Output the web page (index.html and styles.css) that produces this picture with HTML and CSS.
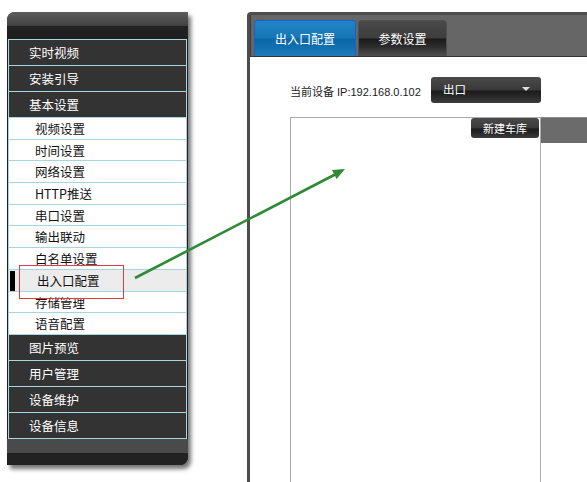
FILE: index.html
```html
<!DOCTYPE html>
<html>
<head>
<meta charset="utf-8">
<link rel="stylesheet" href="styles.css">
</head>
<body>
<div class="page">
  <nav class="sidebar">
    <div class="sb-head"></div>
    <ul class="menu">
      <li class="top">实时视频</li>
      <li class="top">安装引导</li>
      <li class="top">基本设置</li>
      <li class="sub">视频设置</li>
      <li class="sub">时间设置</li>
      <li class="sub">网络设置</li>
      <li class="sub">HTTP推送</li>
      <li class="sub">串口设置</li>
      <li class="sub">输出联动</li>
      <li class="sub">白名单设置</li>
      <li class="sub active">出入口配置</li>
      <li class="sub">存储管理</li>
      <li class="sub">语音配置</li>
      <li class="top">图片预览</li>
      <li class="top">用户管理</li>
      <li class="top">设备维护</li>
      <li class="top">设备信息</li>
    </ul>
    <div class="sb-foot"></div>
  </nav>
  <section class="panel">
    <div class="tabbar">
      <div class="tab tab-active">出入口配置</div>
      <div class="tab">参数设置</div>
    </div>
    <div class="content">
      <div class="row">
        <span class="label">当前设备 IP:192.168.0.102</span>
        <div class="select"><span>出口</span><i class="caret"></i></div>
      </div>
      <div class="table">
        <div class="box">
          <div class="box-head"><button class="btn">新建车库</button></div>
        </div>
        <div class="side-head"></div>
      </div>
    </div>
  </section>
</div>
<svg class="notes" width="587" height="482" viewBox="0 0 587 482">
  <rect x="19.5" y="265.5" width="104" height="33" fill="none" stroke="#e23b3b" stroke-width="1"/>
  <line x1="135" y1="278" x2="335" y2="174.5" stroke="#2f8a35" stroke-width="2.6"/>
  <polygon points="345,169 336.6,179 332,170" fill="#2f8a35"/>
</svg>
</body>
</html>
```
FILE: styles.css
```css
html, body {
  margin: 0;
  padding: 0;
  background: #fff;
  overflow: hidden;
  width: 587px;
  height: 482px;
}
body {
  font-family: "Noto Sans CJK SC", "Liberation Sans", sans-serif;
  position: relative;
}
.page {
  display: flex;
  align-items: flex-start;
  gap: 59px;
  padding: 12px 0 0 7px;
}
.sidebar {
  width: 181px;
  flex: none;
  background: #222;
  border-radius: 8px 0 8px 0;
  box-shadow: 3px 4px 4px rgba(0, 0, 0, 0.55);
  overflow: hidden;
}
.sb-head {
  height: 27px;
  background: linear-gradient(#5c5c5c 0%, #444 48%, #3a3a3a 52%, #222 52%, #1e1e1e 100%);
}
.menu {
  list-style: none;
  margin: 0 1px;
  padding: 0;
  border: 1px solid #a6d5e0;
  border-bottom: none;
}
.menu li {
  border-bottom: 1px solid #a6d5e0;
  font-size: 12.5px;
  white-space: nowrap;
}
.top {
  height: 25px;
  line-height: 25px;
  background: #333;
  color: #fff;
  padding-left: 20px;
}
.sub {
  height: 20.7px;
  line-height: 21px;
  background: #fff;
  color: #111;
  padding-left: 26px;
  position: relative;
}
.sub.active {
  background: #ececec;
  padding-left: 28px;
}
.sub.active::before {
  content: "";
  position: absolute;
  left: 1px;
  top: 1px;
  bottom: 0;
  width: 5px;
  background: #000;
}
.sb-foot {
  height: 26px;
  background: linear-gradient(#4a4a4a 0%, #4a4a4a 52%, #222 52%, #222 100%);
}
.panel {
  flex: 1;
  height: 470px;
  box-sizing: border-box;
  border-top: 3px solid #4d4d4d;
  border-left: 3px solid #4d4d4d;
  border-top-left-radius: 4px;
  background: #fff;
  display: flex;
  flex-direction: column;
}
.tabbar {
  height: 37px;
  flex: none;
  background: #666;
  border-left: 1px solid #3c3c3c;
  border-bottom: 1px solid #333;
  padding: 4px 0 0 3px;
  display: flex;
  gap: 2px;
  align-items: flex-end;
}
.tab {
  height: 36px;
  width: 89px;
  box-sizing: border-box;
  border: 1px solid #505050;
  border-bottom: none;
  border-radius: 4px 4px 0 0;
  background: linear-gradient(#4a4a4a 0%, #3d3d3d 48%, #1a1a1a 52%, #2e2e2e 75%, #4e4e4e 100%);
  color: #fff;
  font-size: 12px;
  line-height: 36px;
  text-align: center;
}
.tab-active {
  width: 102px;
  border-color: #1b5fd4;
  background: linear-gradient(#2284c6 0%, #1676b8 48%, #0a66a6 52%, #1270b0 75%, #1f7cbc 100%);
}
.content {
  flex: 1;
  min-height: 0;
  padding: 20px 0 0 40px;
  display: flex;
  flex-direction: column;
}
.row {
  display: flex;
  align-items: center;
  gap: 10px;
  height: 26px;
  flex: none;
}
.label {
  font-family: "Liberation Sans", "Noto Sans CJK SC", sans-serif;
  font-size: 11px;
  color: #1a1a1a;
  width: 131px;
  white-space: nowrap;
  padding-top: 1px;
}
.select {
  width: 110px;
  height: 26px;
  box-sizing: border-box;
  border-radius: 3px;
  background: linear-gradient(#4a4a4a 0%, #3a3a3a 48%, #1c1c1c 55%, #2c2c2c 80%, #3c3c3c 100%);
  color: #fff;
  font-size: 11.5px;
  display: flex;
  align-items: center;
  justify-content: space-between;
  padding: 0 11px 3px 12px;
}
.caret {
  width: 0;
  height: 0;
  border-left: 4px solid transparent;
  border-right: 4px solid transparent;
  border-top: 4px solid #ddd;
}
.table {
  margin-top: 14px;
  flex: 1;
  min-height: 0;
  display: flex;
  align-items: stretch;
}
.box {
  width: 251px;
  box-sizing: border-box;
  border: 1px solid #aaa;
  border-bottom: none;
  flex: none;
}
.box-head {
  display: flex;
  justify-content: flex-end;
  padding: 0 1px 0 0;
}
.btn {
  width: 68px;
  height: 20px;
  border: none;
  border-radius: 3px;
  background: linear-gradient(#4a4a4a 0%, #3a3a3a 48%, #1c1c1c 55%, #2c2c2c 80%, #3e3e3e 100%);
  color: #fff;
  font-family: "Noto Sans CJK SC", "Liberation Sans", sans-serif;
  font-size: 11px;
  line-height: 20px;
  padding: 0;
}
.side-head {
  flex: 1;
  align-self: flex-start;
  height: 26px;
  background: #6b6b6b;
  border-top: 1px solid #8a8a8a;
  box-sizing: border-box;
}
.notes {
  position: absolute;
  left: 0;
  top: 0;
  pointer-events: none;
}
```
